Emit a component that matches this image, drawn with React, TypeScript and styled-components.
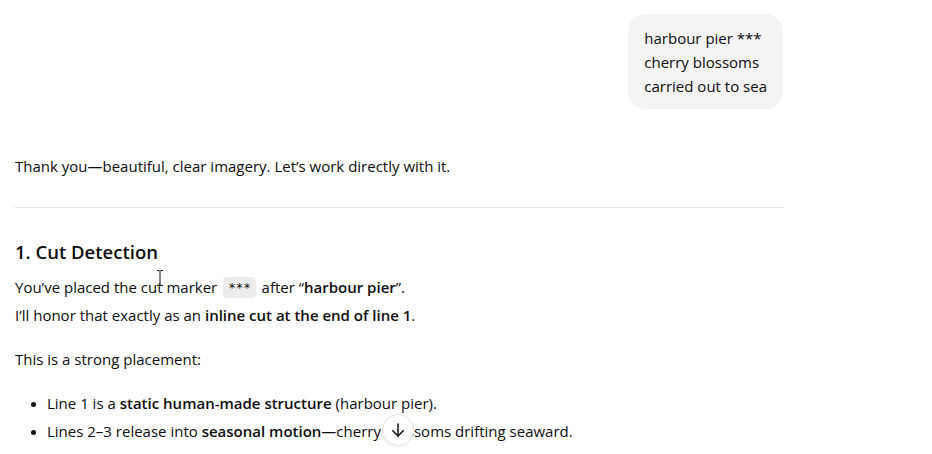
import React from "react";
import styled, { createGlobalStyle } from "styled-components";

const Global = createGlobalStyle`
  html, body { margin: 0; padding: 0; background: #ffffff; }
  body {
    font-family: "Open Sans", "Noto Sans", "Liberation Sans", sans-serif;
    color: #0d0d0d;
    -webkit-font-smoothing: antialiased;
  }
`;

const Page = styled.div`
  width: 932px;
  height: 454px;
  overflow: hidden;
  position: relative;
`;

const Thread = styled.div`
  width: 768px;
  padding: 14px 0 0 15px;
  display: flex;
  flex-direction: column;
`;

const UserRow = styled.div`
  display: flex;
  justify-content: flex-end;
  margin-bottom: 43px;
`;

const Bubble = styled.div`
  background: #f4f4f4;
  border-radius: 18px;
  padding: 12px 16px 11px 16px;
  font-size: 15px;
  line-height: 24px;
  white-space: pre-line;
`;

const Para = styled.p<{ $gap?: number }>`
  margin: 0 0 ${(p) => p.$gap ?? 16}px 0;
  font-size: 15px;
  line-height: 28px;
`;

const Strong = styled.strong`
  font-weight: 600;
`;

const Rule = styled.hr`
  border: none;
  border-top: 1px solid #e3e3e3;
  margin: 27px 0 30px 0;
  height: 0;
`;

const Heading = styled.h3`
  margin: 0 0 7px 0;
  font-size: 18.5px;
  font-weight: 600;
  line-height: 28px;
`;

const Code = styled.code`
  font-family: "DejaVu Sans Mono", "Liberation Mono", monospace;
  font-size: 12.5px;
  line-height: 1;
  background: #ececec;
  border-radius: 4px;
  padding: 3px 5px;
  margin: 0 2px;
  vertical-align: 1px;
`;

const List = styled.ul`
  margin: 0;
  padding: 0 0 0 32px;
  font-size: 15px;
  line-height: 28px;
  li::marker { font-size: 13px; }
`;

const ScrollButton = styled.button`
  position: absolute;
  left: 382px;
  top: 414px;
  width: 32px;
  height: 32px;
  border-radius: 50%;
  border: 1px solid #e3e3e3;
  background: #ffffff;
  display: flex;
  align-items: center;
  justify-content: center;
  padding: 0;
  box-shadow: 0 1px 3px rgba(0,0,0,0.06);
`;

const Cursor = styled.svg`
  position: absolute;
  left: 156px;
  top: 270px;
  pointer-events: none;
`;

export default function App() {
  return (
    <Page>
      <Global />
      <Thread>
        <UserRow>
          <Bubble>{"harbour pier ***\ncherry blossoms\ncarried out to sea"}</Bubble>
        </UserRow>
        <Para $gap={0}>Thank you—beautiful, clear imagery. Let’s work directly with it.</Para>
        <Rule />
        <Heading>1. Cut Detection</Heading>
        <Para>
          You’ve placed the cut marker <Code>***</Code> after “<Strong>harbour pier</Strong>”.
          <br />
          I’ll honor that exactly as an <Strong>inline cut at the end of line 1</Strong>.
        </Para>
        <Para>This is a strong placement:</Para>
        <List>
          <li>
            Line 1 is a <Strong>static human-made structure</Strong> (harbour pier).
          </li>
          <li>
            Lines 2–3 release into <Strong>seasonal motion</Strong>—cherry blossoms drifting seaward.
          </li>
        </List>
      </Thread>
      <Cursor width="8" height="16" viewBox="0 0 8 16" fill="none" stroke="#111" strokeWidth="1">
        <path d="M1 0.5h2.5M4.5 0.5H7M4 1v14M1 15.5h2.5M4.5 15.5H7" />
      </Cursor>
      <ScrollButton aria-label="Scroll down">
        <svg width="18" height="18" viewBox="0 0 24 24" fill="none" stroke="#0d0d0d" strokeWidth="2" strokeLinecap="round" strokeLinejoin="round">
          <path d="M12 4v16" />
          <path d="M5 13l7 7 7-7" />
        </svg>
      </ScrollButton>
    </Page>
  );
}
